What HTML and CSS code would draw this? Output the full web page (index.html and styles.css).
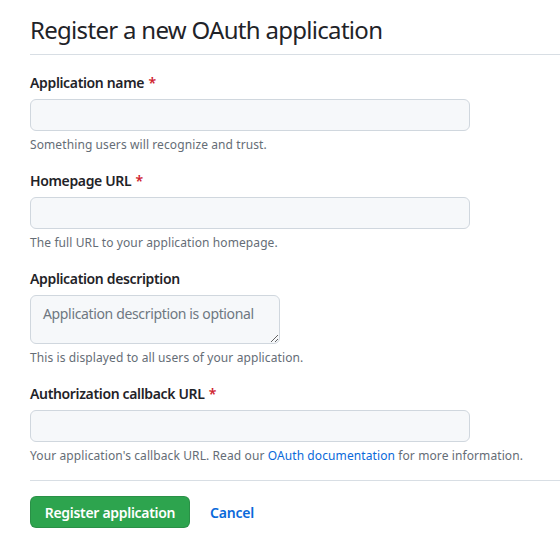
FILE: index.html
```html
<!DOCTYPE html>
<html lang="en">
<head>
<meta charset="utf-8">
<title>Register a new OAuth application</title>
<link rel="stylesheet" href="styles.css">
</head>
<body>
<div class="page">
  <div class="subhead">
    <h2 class="subhead-heading">Register a new OAuth application</h2>
  </div>
  <form class="form">
    <div class="form-group">
      <label class="label" for="name">Application name <span class="req">*</span></label>
      <input class="input" id="name" type="text">
      <p class="note">Something users will recognize and trust.</p>
    </div>
    <div class="form-group">
      <label class="label" for="url">Homepage URL <span class="req">*</span></label>
      <input class="input" id="url" type="text">
      <p class="note">The full URL to your application homepage.</p>
    </div>
    <div class="form-group">
      <label class="label" for="desc">Application description</label>
      <textarea class="textarea" id="desc" placeholder="Application description is optional"></textarea>
      <p class="note">This is displayed to all users of your application.</p>
    </div>
    <div class="form-group form-group-last">
      <label class="label" for="cb">Authorization callback URL <span class="req">*</span></label>
      <input class="input" id="cb" type="text">
      <p class="note">Your application's callback URL. Read our <a class="link" href="#">OAuth documentation</a> for more information.</p>
    </div>
    <div class="actions">
      <button class="btn-primary" type="button">Register application</button>
      <a class="btn-link" href="#">Cancel</a>
    </div>
  </form>
</div>
</body>
</html>
```
FILE: styles.css
```css
html, body {
  margin: 0;
  padding: 0;
  background: #ffffff;
}
body {
  font-family: "Noto Sans", "Open Sans", sans-serif;
  color: #1f2328;
  font-size: 14px;
}
.page {
  padding: 15px 0 0 30px;
}
.subhead {
  padding-bottom: 9px;
  border-bottom: 1px solid #d8dee4;
}
.subhead-heading {
  margin: 0;
  font-size: 24px;
  line-height: 30px;
  font-weight: 400;
  letter-spacing: -0.7px;
}
.form {
  padding-top: 18px;
}
.form-group {
  display: flex;
  flex-direction: column;
  align-items: flex-start;
  margin-bottom: 16px;
}
.form-group-last {
  margin-bottom: 0;
}
.label {
  font-size: 14px;
  line-height: 20px;
  font-weight: 600;
  letter-spacing: -0.35px;
  margin-bottom: 6px;
}
.req {
  color: #cf222e;
  margin-left: 1px;
}
.input, .textarea {
  box-sizing: border-box;
  font-family: inherit;
  font-size: 14px;
  color: #1f2328;
  background: #f6f8fa;
  border: 1px solid #d0d7de;
  border-radius: 6px;
  padding: 5px 12px;
  margin: 0;
  outline: none;
}
.input {
  width: 440px;
  height: 32px;
}
.textarea {
  width: 250px;
  height: 49px;
  line-height: 20px;
  padding: 8px 12px;
  letter-spacing: -0.35px;
  resize: both;
}
.textarea::placeholder {
  color: #6e7781;
}
.note {
  margin: 4px 0 0;
  font-size: 12px;
  line-height: 20px;
  letter-spacing: 0.1px;
  color: #656d76;
}
.link {
  color: #0969da;
  text-decoration: none;
}
.actions {
  display: flex;
  align-items: center;
  gap: 20px;
  margin-top: 14px;
  border-top: 1px solid #d8dee4;
  padding-top: 15px;
}
.btn-primary {
  box-sizing: border-box;
  height: 32px;
  width: 160px;
  padding: 0;
  white-space: nowrap;
  font-family: inherit;
  font-size: 14px;
  font-weight: 600;
  letter-spacing: -0.3px;
  color: #ffffff;
  background: #2da44e;
  border: 1px solid rgba(27, 31, 36, 0.15);
  border-radius: 6px;
}
.btn-link {
  font-size: 14px;
  font-weight: 600;
  letter-spacing: -0.2px;
  color: #0969da;
  text-decoration: none;
}
```
